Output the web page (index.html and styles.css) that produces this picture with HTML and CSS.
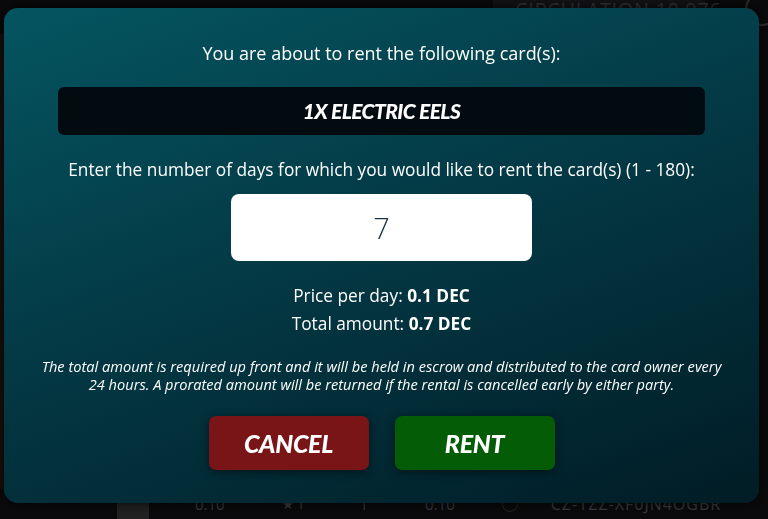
FILE: index.html
```html
<!DOCTYPE html>
<html>
	<head>
		<meta charset="utf-8" />
		<title>Rent card</title>
		<link rel="stylesheet" href="styles.css">
	</head>
	<body>
		<div class="page">
			<div class="page-top">
				<div class="stat-box">CIRCULATION 10,976</div>
				<span class="round-icon"></span>
			</div>
			<div class="page-fill">
				<div class="card-art"></div>
			</div>
			<div class="table-row">
				<span class="thumb"></span>
				<span class="cell c1">0.10</span>
				<span class="cell c2">&#9733; 1</span>
				<span class="cell c3">1</span>
				<span class="cell c4">0.10</span>
				<span class="cell c5"><i class="dot"></i></span>
				<span class="cell c6">CZ-1ZZ-XF0JN4OGBR</span>
			</div>
		</div>

		<div class="overlay">
			<div class="modal">
				<p class="lead">You are about to rent the following card(s):</p>
				<div class="card-name">1X ELECTRIC EELS</div>
				<p class="lead ask">Enter the number of days for which you would like to rent the card(s) (1 - 180):</p>
				<input class="days" type="text" value="7">
				<div class="sums">
					<p>Price per day: <b>0.1 DEC</b></p>
					<p>Total amount: <b>0.7 DEC</b></p>
				</div>
				<p class="note">The total amount is required up front and it will be held in escrow and distributed to the card owner every 24 hours. A prorated amount will be returned if the rental is cancelled early by either party.</p>
				<div class="actions">
					<a class="btn btn-cancel" href="javascript:">CANCEL</a>
					<a class="btn btn-rent" href="javascript:">RENT</a>
				</div>
			</div>
		</div>
	</body>
</html>
```

FILE: styles.css
```css
*{margin: 0;padding: 0;box-sizing: border-box;}
html,body{height: 100%;}
body{
	background: #121215;
	font-family: "Open Sans", "Liberation Sans", sans-serif;
	overflow: hidden;
	color: #fff;
}
a{
	text-decoration: none;
	color: white;
}

/* page behind the dialog */
.page{
	height: 519px;
	display: flex;
	flex-direction: column;
}
.page-top{
	height: 34px;
	display: flex;
	justify-content: flex-end;
	align-items: flex-start;
}
.stat-box{
	width: 212px;
	height: 30px;
	margin-right: 40px;
	background: #222226;
	color: #5c5c60;
	font-size: 20px;
	line-height: 20px;
	padding: 0 0 0 22px;
	letter-spacing: 0.6px;
	white-space: nowrap;
}
.round-icon{
	width: 34px;
	height: 34px;
	border: 2px solid #555;
	border-radius: 50%;
	margin-top: -8px;
	margin-right: -11px;
}
.page-fill{
	flex: 1;
}
.card-art{
	width: 80px;
	height: 100%;
	background: linear-gradient(90deg, #2a1c18, #3a2a22 60%, #121215);
}
.table-row{
	height: 30px;
	display: flex;
	align-items: center;
	background: #131316;
	color: #6a6a6e;
	font-size: 15px;
}
.thumb{
	width: 32px;
	height: 30px;
	margin-left: 117px;
	background: #3c3c3e;
}
.cell{display: block;}
.c1{margin-left: 46px;}
.c2{margin-left: 57px;font-size: 13px;}
.c3{margin-left: 55px;}
.c4{margin-left: 57px;}
.c5{margin-left: 47px;}
.dot{
	display: block;
	width: 16px;
	height: 16px;
	border: 1px solid #444;
	border-radius: 50%;
}
.c6{margin-left: 33px;font-size: 16px;letter-spacing: 1px;}

/* dialog */
.overlay{
	position: fixed;
	top: 0;
	left: 0;
	right: 0;
	bottom: 0;
	background: rgba(0,0,0,0.45);
	padding: 8px 9px 16px 4px;
}
.modal{
	height: 100%;
	border-radius: 14px;
	background: linear-gradient(160deg, #045560 0%, #033a46 45%, #011c25 100%);
	box-shadow: 0 0 12px rgba(0,0,0,0.8);
	padding: 34px 54px 0;
	display: flex;
	flex-direction: column;
	align-items: center;
	text-align: center;
}
.lead{
	font-size: 18px;
	line-height: 22px;
}
.card-name{
	width: 100%;
	height: 48px;
	margin-top: 23px;
	background: #020c10;
	border-radius: 6px;
	font-family: Lato, "Liberation Sans", sans-serif;
	font-weight: 900;
	font-style: italic;
	font-size: 21px;
	line-height: 48px;
	letter-spacing: -0.6px;
}
.ask{margin-top: 24px;font-size: 17.3px;}
.days{
	display: block;
	width: 301px;
	height: 67px;
	margin-top: 13px;
	border: none;
	border-radius: 8px;
	background: #fff;
	text-align: center;
	font-family: "Open Sans", sans-serif;
	font-weight: 300;
	font-size: 29px;
	color: #1c3140;
	outline: none;
}
.sums{
	margin-top: 21px;
	font-size: 17.3px;
	line-height: 28px;
}
.sums b{font-weight: 700;}
.note{
	margin-top: 19px;
	font-size: 14.6px;
	line-height: 18px;
	font-style: italic;
	width: 686px;
}
.actions{
	margin-top: 23px;
	display: flex;
	gap: 26px;
}
.btn{
	display: block;
	width: 160px;
	height: 54px;
	border-radius: 7px;
	font-family: Lato, "Liberation Sans", sans-serif;
	font-weight: 900;
	font-style: italic;
	font-size: 25px;
	line-height: 54px;
	letter-spacing: -0.3px;
	box-shadow: 0 2px 8px rgba(0,0,0,0.5);
}
.btn-cancel{background: #7a1517;}
.btn-rent{background: #045c06;}
```
